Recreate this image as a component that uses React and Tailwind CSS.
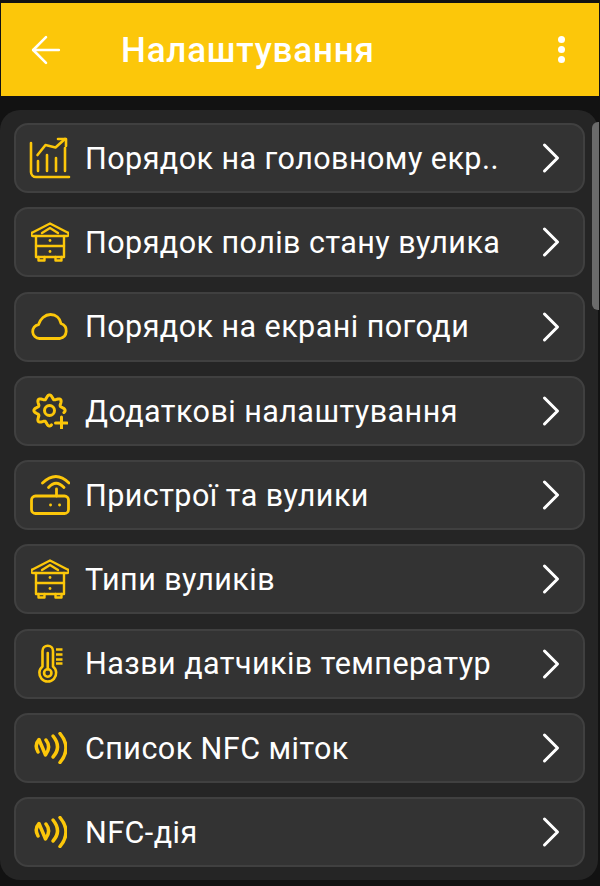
import React from 'react';
import { ArrowLeft, ChevronRight } from 'lucide-react';

const iconProps = {
  fill: 'none',
  stroke: '#fcc70a',
  strokeLinecap: 'round',
  strokeLinejoin: 'round',
};

// gear outline, left open at the lower right where the plus sits
const gearPath = () => {
  const pts = [];
  for (let deg = 82; deg <= 368; deg += 2) {
    const a = (deg * Math.PI) / 180;
    const r = 13.6 + 2 * Math.cos(8 * a);
    pts.push(`${(17.5 + r * Math.cos(a)).toFixed(2)} ${(17.5 + r * Math.sin(a)).toFixed(2)}`);
  }
  return 'M' + pts.join('L');
};

const ChartIcon = () => (
  <svg width="42" height="42" viewBox="0 0 42 42" {...iconProps} strokeWidth="2.600">
    <path d="M2 6v29a5 5 0 0 0 5 5h33" />
    <path d="M9 34v-10M18 34v-16M27 34v-13M36 34v-23" />
    <path d="M8.500 18l8-10 10 2.500L36 2" />
    <path d="M29 2h8v7" />
  </svg>
);

const HiveIcon = () => (
  <svg width="38" height="40" viewBox="0 0 38 40" {...iconProps} strokeWidth="2.400">
    <path d="M1.500 10.500L19 1.500l17.500 9a1.800 1.800 0 0 1-.5 3.500H2a1.800 1.800 0 0 1-.5-3.500z" />
    <path d="M11 11l8-5 8 5" />
    <path d="M5 14v21h28V14" />
    <path d="M5 24h28" />
    <path d="M7.500 35v3.500h6V35M24.500 35v3.500h6V35" />
    <circle cx="19" cy="18.500" r="1.400" fill="#fcc70a" stroke="none" />
    <circle cx="19" cy="29.500" r="1.400" fill="#fcc70a" stroke="none" />
  </svg>
);

const CloudIcon = () => (
  <svg width="38" height="28" viewBox="0 0 38 28" {...iconProps} strokeWidth="2.800">
    <path d="M8.500 25.500a7 7 0 0 1-1-13.900C9 6 14 1.500 19.500 1.500 25 1.500 29 5 30 10.500a7.800 7.800 0 0 1-1 15z" />
  </svg>
);

const GearPlusIcon = () => (
  <svg width="36" height="36" viewBox="0 0 36 36" {...iconProps} strokeWidth="3">
    <path d={gearPath()} />
    <circle cx="17.500" cy="17.500" r="5" />
    <path d="M29.500 24v11.500M23.500 30h11.500" />
  </svg>
);

const RouterIcon = () => (
  <svg width="40" height="40" viewBox="0 0 40 40" {...iconProps} strokeWidth="2.800">
    <rect x="1.500" y="21" width="37" height="17.500" rx="4" />
    <path d="M26.500 14v7" />
    <path d="M18.500 12.500Q26 4 34 12.500" />
    <path d="M12.500 8Q26 -5 39 8" />
    <path d="M20.500 30h.1M29.500 30h.1" />
  </svg>
);

const ThermometerIcon = () => (
  <svg width="26" height="40" viewBox="0 0 26 40" {...iconProps} strokeWidth="2.600">
    <path d="M5.500 22.500V7a5.250 5.250 0 0 1 10.500 0v15.500a8.400 8.400 0 1 1-10.500 0z" />
    <circle cx="10.750" cy="29" r="3.700" />
    <path d="M10.750 9v16.300" />
    <path d="M19 5.500h6.500M19 10.500h6.500M19 15.500h6.500M19 19.500h6.500" strokeLinecap="butt" />
  </svg>
);

const NfcIcon = () => (
  <svg width="34" height="32" viewBox="0 0 34 32" {...iconProps} strokeWidth="3.500">
    <path d="M5 20Q1 13 6 7.500L12.500 23Q18.500 15 13 8" />
    <path d="M20 4Q29 15 20 25" />
    <path d="M27 1.500Q39 16 27 30.500" />
  </svg>
);

const items = [
  { label: 'Порядок на головному екр..', icon: <ChartIcon /> },
  { label: 'Порядок полів стану вулика', icon: <HiveIcon /> },
  { label: 'Порядок на екрані погоди', icon: <CloudIcon /> },
  { label: 'Додаткові налаштування', icon: <GearPlusIcon /> },
  { label: 'Пристрої та вулики', icon: <RouterIcon /> },
  { label: 'Типи вуликів', icon: <HiveIcon /> },
  { label: 'Назви датчиків температур', icon: <ThermometerIcon /> },
  { label: 'Список NFC міток', icon: <NfcIcon /> },
  { label: 'NFC-дія', icon: <NfcIcon /> },
];

const App = () => {
  return (
    <div className="relative h-[886px] w-[600px] overflow-hidden bg-[#121212] pt-[3px] font-['Roboto',sans-serif]">
      <header className="mx-px flex h-[93px] items-center bg-[#fcc70a] pl-[23px] pr-[34px] text-white">
        <ArrowLeft size={44} strokeWidth={1.400} />
        <h1 className="ml-[53px] pt-[3px] text-[35px] font-medium tracking-[0.8px]">Налаштування</h1>
        <div className="ml-auto flex flex-col gap-[3px]">
          <span className="h-[7px] w-[7px] rounded-full bg-white" />
          <span className="h-[7px] w-[7px] rounded-full bg-white" />
          <span className="h-[7px] w-[7px] rounded-full bg-white" />
        </div>
      </header>

      <main className="mt-[14px] flex h-[770px] w-[598px] flex-col gap-[14.250px] rounded-[20px] bg-[#252525] px-[14px] pt-[13px]">
        {items.map((item) => (
          <div
            key={item.label}
            className="flex h-[70px] w-[571px] shrink-0 items-center rounded-[14px] border-2 border-[#404040] bg-[#333333]"
          >
            <div className="flex w-[69px] shrink-0 items-center justify-center pr-[2px]">{item.icon}</div>
            <span className="whitespace-nowrap pt-[2px] text-[30.5px] leading-none tracking-[0.45px] text-white">{item.label}</span>
            <ChevronRight size={52} strokeWidth={1.400} className="ml-auto mr-[6px] shrink-0 text-white" />
          </div>
        ))}
      </main>

      {/* scrollbar thumb */}
      <div className="absolute right-px top-[122px] h-[188px] w-[7px] rounded-l-[6px] bg-[#6b6b6b]" />
    </div>
  );
};

export default App;
